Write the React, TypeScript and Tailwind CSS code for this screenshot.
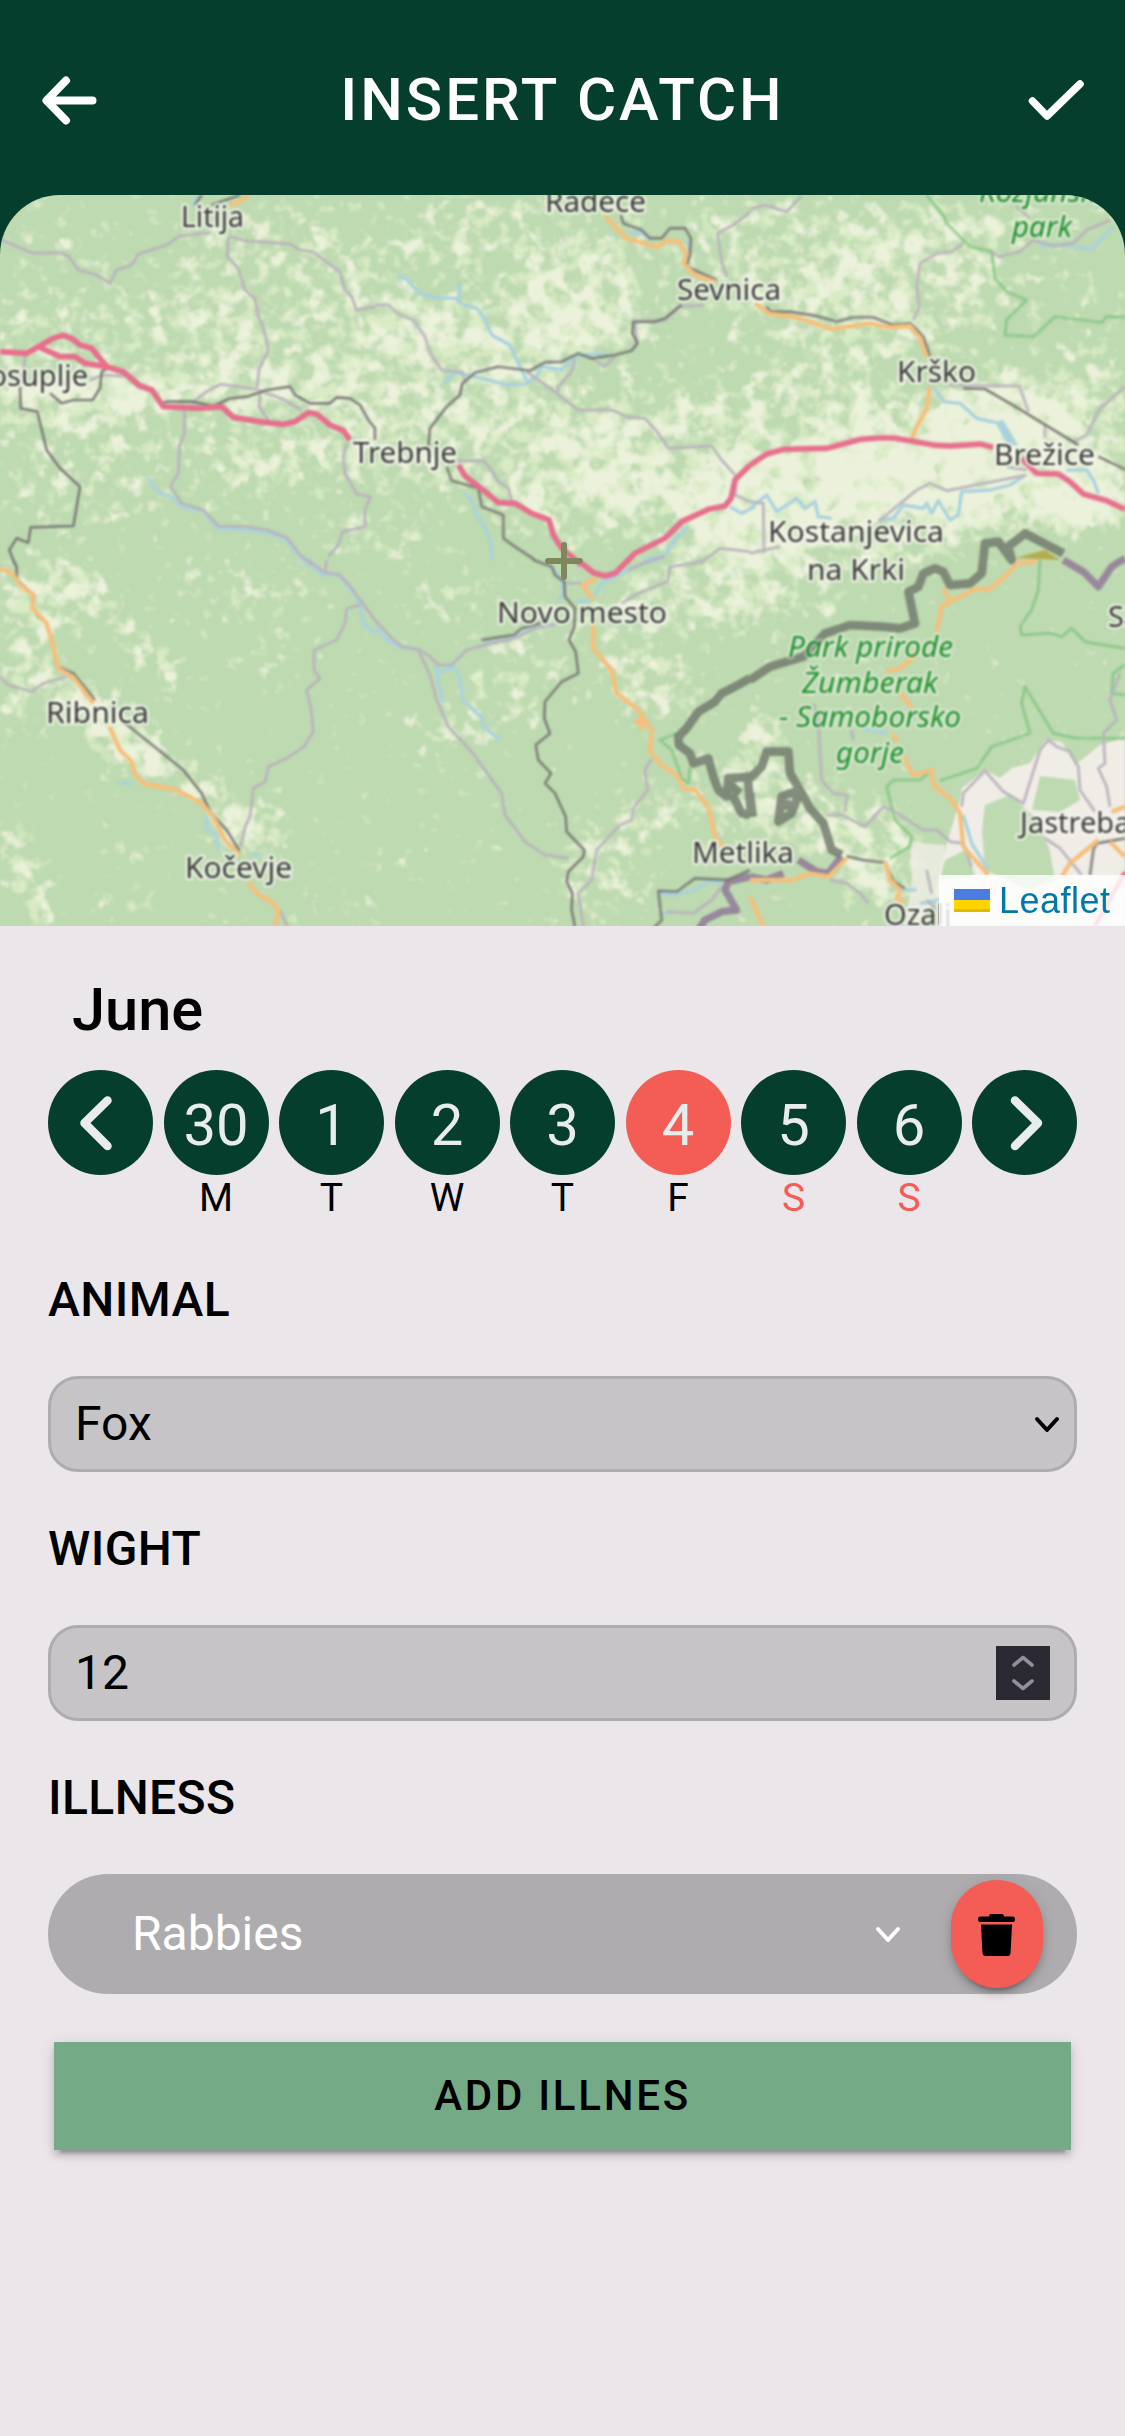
import React from "react";

/* ---------- Map ---------- */

type Kind = "motorway" | "main" | "road" | "rail" | "river" | "border" | "purple" | "park";

const STROKES: Record<Kind, { color: string; width: number; opacity?: number }> = {
  river: { color: "#a9d2de", width: 10 },
  park: { color: "#7cc27c", width: 9, opacity: 0.7 },
  road: { color: "#b9b3bb", width: 9, opacity: 0.9 },
  main: { color: "#f6bf7b", width: 13 },
  motorway: { color: "#e66f8d", width: 17 },
  rail: { color: "#767672", width: 8, opacity: 0.9 },
  border: { color: "#71786c", width: 26, opacity: 0.82 },
  purple: { color: "#8f7397", width: 22, opacity: 0.8 },
};

type Tile = { x: number; y: number; lines: [Kind, string][] };

/* Every tile holds its lines in thirds of a pixel, from its own corner. */
const TILES: Tile[] = [
  {
    x: 0,
    y: 190,
    lines: [
      ["river", "M445 862 L460 890 L485 912 L515 920 L550 952 L610 962 L650 1015 L740 1020 L800 1028 L860 1048 L890 1090 L930 1130"],
      ["road", "M0 148 L40 165 L100 190 L180 188 L205 198 L235 240 L290 255 L330 280 L350 240 L395 225 L415 192 L500 165 L540 137 L630 128"],
      ["road", "M690 140 L740 153 L870 162 L900 180 L940 186 L1020 245 L1035 300 L1055 320 L1070 360 L1125 350"],
      ["road", "M685 140 L682 200 L715 235 L735 300 L765 325 L775 380 L790 410 L805 480 L778 535 L770 598 L660 583 L615 608 L575 640"],
      ["road", "M775 600 L850 628 L905 660"],
      ["road", "M780 605 L778 650 L805 690"],
      ["road", "M553 655 L553 730 L538 770 L535 850 L512 888 L545 940 L610 960 L655 1008 L740 1010 L800 1020 L860 1042 L900 1095 L940 1125"],
      ["road", "M1040 760 L1030 800 L1035 850 L1070 912 L1112 920 L1095 960 L1095 1010 L1028 1025 L1015 1065 L985 1100"],
      ["road", "M75 495 L68 580"],
      ["road", "M270 570 L310 555 L400 560"],
      ["main", "M690 45 L720 35 L745 15"],
      ["river", "M580 50 L590 15"],
      ["rail", "M585 45 L605 15"],
      ["rail", "M635 45 L720 15"],
      ["rail", "M60 590 L62 655 L112 665 L140 780 L180 835 L240 890 L230 950 L220 1008 L92 1012 L85 1058 L50 1045 L28 1080 L45 1125"],
      ["rail", "M150 610 L185 640 L220 630 L278 630 L300 595 L305 545 L330 530"],
      ["motorway", "M0 485 L80 490 L160 445 L190 436 L215 445 L240 465 L275 475 L320 530"],
      ["motorway", "M115 470 L180 500 L225 500 L255 520 L320 530 L370 545 L420 588 L455 600 L490 650 L600 655 L665 650 L700 682 L780 695 L850 703 L885 695 L925 668 L950 672 L990 705 L1030 722 L1050 750"],
      ["rail", "M320 532 L365 545 L415 590 L455 598 L485 640 L500 635 L575 635 L640 648 L690 625 L740 620 L800 600 L870 590 L885 615 L930 640 L990 640 L1010 622 L1050 625 L1080 645 L1105 690 L1125 715 L1125 750"],
    ],
  },
  {
    x: 375,
    y: 190,
    lines: [
      ["river", "M68 258 L95 268 L135 310 L175 322 L245 325 L260 342 L305 355 L325 380 L350 435 L405 465 L430 520 L455 570"],
      ["river", "M253 278 L253 325"],
      ["river", "M208 580 L240 548 L300 560 L400 585 L450 582 L485 560 L500 530 L560 540 L600 500 L665 490 L700 500"],
      ["river", "M268 910 L290 930 L310 985 L335 1020 L350 1070 L352 1110"],
      ["river", "M760 128 L800 130 L830 145 M940 150 L945 190"],
      ["river", "M940 1010 L900 1050 L870 1095 L810 1108"],
      ["river", "M1065 950 L1100 970 L1140 950"],
      ["road", "M0 345 L40 345 L70 372 L115 390 L150 440 L165 490 L200 540 L260 545 L275 580"],
      ["road", "M455 545 L545 610 L610 660 L710 660 L760 682 L810 685 L850 730 L880 775 L1010 768 L1040 810 L1085 860 L1080 915 L1125 935"],
      ["road", "M600 505 L590 545 L550 590 L548 615"],
      ["road", "M650 505 L690 530 L720 500"],
      ["road", "M245 812 L325 812 L350 840 L370 875 L400 895 L410 935"],
      ["road", "M1125 65 L1075 105 L1028 130 L1040 215 L1055 262"],
      ["road", "M760 1140 L830 1110 L870 1100 M975 1120 L1035 1075 L1125 1085"],
      ["main", "M690 78 L755 145 L845 172 L875 152 L912 155 L935 190 L925 220 L960 255 L1020 275"],
      ["rail", "M738 75 L745 100 L800 120 L825 145 L860 145 L885 115 L930 115 L948 145 L945 190 L935 230 L1025 270"],
      ["road", "M985 345 L910 350 L870 390 L780 395 L785 460 L770 480"],
      ["rail", "M920 345 L870 385 L840 395 L775 395 L772 430 L788 460 L770 482 L720 495 L650 505 L610 490 L560 515 L510 517 L465 542 L370 530 L300 548 L262 580 L255 615 L215 650 L165 715 L160 770"],
      ["rail", "M215 830 L230 872 L310 895 L320 950 L385 975 L385 1045 L420 1070 L480 1110"],
      ["motorway", "M250 825 L270 858 L330 905 L370 938 L420 940 L470 970 L522 990 L535 1035 L560 1075 L620 1125"],
      ["motorway", "M755 1115 L780 1090 L870 1045 L920 995 L1000 958 L1050 948 L1068 925 L1080 870 L1125 825"],
    ],
  },
  {
    x: 750,
    y: 190,
    lines: [
      ["park", "M530 15 L580 75 L590 100 L640 150 L660 170 L725 185 L735 265 L770 305 L830 330 L770 390 L765 435 L850 440 L915 380 L1055 398 L1070 380 L1125 382"],
      ["river", "M550 590 L580 635 L630 640 L680 685 L750 700"],
      ["river", "M0 955 L50 915 L80 965 L140 925 L165 955 L195 935 L205 980 L245 985"],
      ["river", "M390 990 L430 985 L460 945 L520 955 L530 940 L545 970 L565 932 L600 990 L625 975 L635 905 L720 900 L780 885 L820 860"],
      ["river", "M870 170 L910 165 L950 165 L1025 178 L1090 110"],
      ["river", "M950 840 L1010 840 L1030 870 L1045 910"],
      ["road", "M0 58 L45 45 L110 65 L155 18"],
      ["road", "M640 160 L605 185 L560 190 L510 220 L500 290 L508 350 L490 390"],
      ["road", "M725 185 L750 200 L810 185 L850 150 L910 168 L970 160 L1010 120 L1080 90 M800 50 L840 85"],
      ["road", "M600 585 L808 588 L835 665 M1125 590 L1050 655 L1010 735 L970 755 M885 700 L885 745"],
      ["road", "M830 855 L590 902 L540 880 L500 900 L385 995"],
      ["road", "M0 935 L40 940 L42 1090 M0 1090 L90 1070 M770 830 L830 840"],
      ["main", "M15 340 L60 372 L130 380 L200 402 L245 418 L360 400 L415 412 L480 408 L510 445 L530 500 M540 590 L530 655 L500 710 L485 745"],
      ["rail", "M50 350 L60 365 L120 365 L200 378 L260 395 L310 382 L370 382 L430 405 L480 400 L520 440 L540 500"],
      ["rail", "M640 595 L705 597 L800 652 L985 765 M1045 800 L1125 838"],
      ["motorway", "M0 825 L50 792 L100 778 L230 775 L330 748 L400 743 L440 745 L550 765 L600 768 L690 762 L730 772"],
      ["motorway", "M815 805 L860 850 L925 852 L960 875 L1000 912 L1070 932 L1125 958"],
    ],
  },
  {
    x: 0,
    y: 560,
    lines: [
      ["river", "M915 0 L965 42 L1015 45 L1055 90 L1080 135 L1090 190 L1125 220"],
      ["river", "M618 770 L620 810 L645 820 L655 870 M352 668 L395 670 M755 880 L780 885"],
      ["road", "M0 350 L25 375 L95 395 L130 370 L200 350"],
      ["road", "M925 0 L970 35 L1020 45 L1055 85 L1125 180 M980 0 L975 35"],
      ["road", "M1080 135 L1040 145 L1035 190 L1010 240 L942 270 L942 330 L960 355 L920 390 L932 440 L940 515 L912 560 L860 595 L805 620 L795 665 L760 685 L750 770 L735 800 L722 860"],
      ["main", "M0 25 L40 42 L60 75 L100 105 L97 145 L140 190 L155 240 L175 325 L220 352 L280 430 M328 500 L360 570 L395 605 L405 645 L435 672 L530 690 L605 730 L640 770 L675 840 L720 885 M745 965 L770 1000 L820 1030 L835 1055 L825 1100"],
      ["rail", "M40 0 L50 20 L50 60 L100 105 L97 140 L115 170 L137 185 L155 240 L172 320 L220 340 L285 420 M370 485 L550 630 L605 700 L630 755 L680 810 L720 875"],
      ["road", "M840 1050 L862 1100"],
    ],
  },
  {
    x: 375,
    y: 560,
    lines: [
      ["river", "M0 200 L35 240 L75 262 L125 265"],
      ["river", "M185 315 L188 360 L205 430 M190 340 L235 320 L255 350 L262 420 L320 470 L325 500 L375 540"],
      ["river", "M325 250 L400 240 L470 205 L540 190"],
      ["river", "M530 20 L560 60 L565 100 L550 125 M850 0 L790 15 L720 50 L680 70 L660 105"],
      ["river", "M605 125 L650 120"],
      ["river", "M850 998 L900 1005 L960 990 L1000 965 L1040 970 M860 1060 L880 1060"],
      ["road", "M0 180 L50 235 L80 260 L130 268 L165 290 L190 315 L230 315 L275 270 L340 252 L420 235 L490 200 L540 195"],
      ["road", "M130 270 L165 345 L185 420 L220 500 L290 575 L380 700 L390 765 L450 845 L510 885 L580 895"],
      ["road", "M830 595 L810 630 L818 690 L775 745 L770 780 L735 795 L665 870 L650 960 L610 1000 L625 1100"],
      ["road", "M980 0 L960 10 L885 20 L878 65 L790 100 L740 130 M575 70 L620 70"],
      ["road", "M875 1055 L955 1060 L1010 1020 L1040 980"],
      ["rail", "M475 0 L530 20 L540 45 L568 65 L570 110 L600 145 L598 200 L582 240 L602 275 L610 340 L560 365 L510 425 L508 475 L525 520 L482 555 L490 600 L528 640 L510 670 L540 700 L572 770 L575 815 L628 870 L625 890 L580 935 L575 965 L592 1000 L590 1050 L600 1100"],
      ["rail", "M320 240 L415 225 L440 205 L500 188"],
      ["rail", "M830 1110 L860 1080 L850 992 L905 995 L960 955 L1060 960 L1125 930"],
      ["main", "M665 55 L622 75 L655 120 M655 190 L655 265 L710 330 L725 400 L790 450 L830 510 L825 575 L860 615 L905 645 L925 685 L960 690 L1000 740 L1020 830 L1045 860 M778 490 L800 480"],
      ["motorway", "M620 10 L655 38 L690 48 L720 40 L760 0"],
      ["park", "M905 520 L855 540 L890 570 L920 655 L940 670 L945 620"],
      ["purple", "M970 1110 L990 1080 L1040 1055 L1085 1050 L1050 990 L1060 965 L1125 950"],
      ["border", "M1125 355 L1080 380 L1040 400 L1020 425 L970 455 L935 505 L910 530 L912 555 L945 580 L955 610 L1000 595 L1015 650 L1030 690 L1055 710 L1060 655 L1125 650 M1070 700 L1100 760 L1125 765 M1060 670 L1095 700 M1118 650 L1122 700 L1128 760"],
    ],
  },
  {
    x: 750,
    y: 560,
    lines: [
      ["park", "M870 0 L865 90 L845 150 L810 200 L815 225 L900 220 L935 230 L965 205 L1005 245 L1060 255 L1125 265"],
      ["park", "M1125 315 L1090 340 L1085 400 L1125 405"],
      ["park", "M1125 535 L980 535 L910 520 L825 380 L815 430 L840 520 L725 560 L680 625 L570 662 M535 640 L510 660 L430 660 L410 680 L435 780 L485 830 L480 860 L420 895"],
      ["river", "M640 765 L665 850 L715 930 M340 505 L410 520 M455 990 L500 990 M510 1030 L570 1020"],
      ["road", "M190 430 L205 480 L210 580 L215 660 L250 700 L292 705 L285 755"],
      ["road", "M230 765 L275 765 L345 800 L400 740 L435 755 L520 810 L560 810 L600 845 L640 850 L665 920"],
      ["road", "M635 740 L640 700 L705 632 L760 695 L820 730 L870 570 L895 540 L920 560 L960 575 L985 620 L990 690 L1035 755"],
      ["road", "M1110 340 L1080 420 L1100 480 L1060 520 L1065 610 L1045 625 L1070 680 L1080 740"],
      ["road", "M885 835 L930 865 L995 945 M240 960 L290 970 L330 1000 L355 1030 M530 930 L545 1000"],
      ["road", "M560 1050 L530 1020 M305 510 L310 540"],
      ["main", "M860 5 L800 10 L770 45 L715 90 L680 85 L600 125 L580 85 M600 125 L575 140 L560 215 M500 280 L460 320 L410 335 M448 400 L485 440 M460 590 L490 645 L545 630 L550 675 L605 720 L630 760 L640 860 L715 945"],
      ["main", "M0 1010 L40 1100 M0 960 L130 960 L180 940 L235 950 L290 895"],
      ["main", "M430 520 L440 545 M1085 755 L1125 740 M1045 840 L960 910 L935 950 M1080 845 L1125 890 M405 905 L420 960 L450 990 L440 1020 L465 1025"],
      ["rail", "M290 888 L340 900 L405 908 L430 965 L465 985"],
      ["rail", "M1125 835 L1040 850 L1030 870 L1020 945"],
      ["purple", "M0 950 L50 960 L100 940 M145 900 L200 935 L235 940 L275 890"],
      ["purple", "M940 0 L1000 35 L1045 80 L1085 20 L1125 -5"],
      ["border", "M0 360 L60 320 L160 290 L225 220 L300 195 L400 200 L450 205 L495 190 L475 95 L505 80 L520 40 L555 25 L580 35 L600 75 L660 70 L695 40 L705 -50 L745 -55 L785 0 L775 -40 L825 -80 L940 -20"],
      ["border", "M0 655 L35 620 L50 575 L115 575 L120 640 L150 690 L95 710 L85 785 L125 760 L150 690 L180 745 L220 790 L245 870 L275 885 M0 700 L8 770 M110 720 L110 750"],
    ],
  },
];

/* Farmland density: cx, cy, rx, ry, opacity */
const FIELDS: [number, number, number, number, number][] = [
  [100, 340, 170, 55, 0.22],
  [290, 300, 120, 90, 0.22],
  [60, 400, 110, 26, 0.4],
  [190, 395, 130, 22, 0.35],
  [80, 470, 90, 50, 0.16],
  [300, 430, 80, 60, 0.22],
  [245, 470, 60, 26, 0.25],
  [520, 240, 130, 40, 0.22],
  [500, 330, 150, 40, 0.34],
  [580, 300, 60, 50, 0.34],
  [440, 380, 130, 55, 0.3],
  [500, 450, 170, 45, 0.28],
  [660, 450, 120, 60, 0.34],
  [600, 510, 100, 40, 0.34],
  [770, 500, 90, 60, 0.55],
  [790, 250, 110, 60, 0.28],
  [840, 330, 90, 50, 0.2],
  [900, 290, 110, 60, 0.28],
  [960, 230, 80, 30, 0.3],
  [820, 400, 80, 40, 0.28],
  [900, 455, 100, 45, 0.6],
  [1000, 420, 70, 40, 0.75],
  [960, 480, 140, 40, 0.6],
  [1090, 420, 50, 70, 0.4],
  [1090, 500, 50, 30, 0.7],
  [1040, 520, 70, 20, 0.4],
  [840, 530, 150, 45, 0.42],
  [780, 600, 70, 36, 0.26],
  [700, 590, 80, 45, 0.42],
  [580, 640, 100, 50, 0.24],
  [660, 690, 50, 36, 0.4],
  [450, 600, 50, 36, 0.25],
  [500, 700, 50, 40, 0.3],
  [450, 735, 40, 20, 0.35],
  [380, 540, 70, 24, 0.3],
  [30, 630, 45, 60, 0.35],
  [50, 590, 40, 40, 0.3],
  [30, 700, 60, 30, 0.35],
  [240, 590, 80, 35, 0.25],
  [270, 655, 40, 26, 0.22],
  [130, 750, 36, 30, 0.45],
  [100, 720, 36, 24, 0.35],
  [250, 830, 40, 24, 0.6],
  [130, 845, 14, 16, 0.4],
  [125, 905, 20, 22, 0.35],
  [10, 865, 12, 26, 0.4],
  [350, 910, 22, 12, 0.45],
  [600, 870, 45, 50, 0.4],
  [650, 810, 40, 26, 0.4],
  [720, 800, 36, 50, 0.3],
  [390, 870, 18, 16, 0.4],
  [760, 760, 22, 60, 0.55],
  [800, 815, 50, 40, 0.42],
  [870, 840, 50, 40, 0.45],
  [880, 890, 50, 20, 0.45],
];

const VALLEYS = [
  "M65 560 L105 610 L135 640 L175 685",
  "M75 690 L130 740 L205 790 L245 840",
  "M5 830 L20 870 L45 926",
];

const LABELS: { t: string; x: number; y: number; w?: number; park?: boolean; end?: boolean }[] = [
  { t: "Litija", x: 181, y: 227, w: 63 },
  { t: "Radeče", x: 545, y: 212, w: 101 },
  { t: "Sevnica", x: 677, y: 300, w: 104 },
  { t: "Grosuplje", x: 88, y: 386, end: true },
  { t: "Trebnje", x: 353, y: 463, w: 104 },
  { t: "Krško", x: 897, y: 382, w: 79 },
  { t: "Brežice", x: 994, y: 465, w: 101 },
  { t: "Kostanjevica", x: 768, y: 542, w: 176 },
  { t: "na Krki", x: 807, y: 580, w: 98 },
  { t: "Novo mesto", x: 497, y: 623, w: 170 },
  { t: "Ribnica", x: 46, y: 723, w: 103 },
  { t: "Kočevje", x: 185, y: 878, w: 107 },
  { t: "Metlika", x: 692, y: 863, w: 102 },
  { t: "Jastrebarsko", x: 1020, y: 833 },
  { t: "Samobor", x: 1108, y: 627 },
  { t: "Ozalj", x: 884, y: 925 },
  { t: "Kozjanski", x: 979, y: 202, w: 124, park: true },
  { t: "park", x: 1012, y: 237, w: 60, park: true },
  { t: "Park prirode", x: 788, y: 657, w: 165, park: true },
  { t: "Žumberak", x: 802, y: 693, w: 136, park: true },
  { t: "- Samoborsko", x: 779, y: 727, w: 182, park: true },
  { t: "gorje", x: 836, y: 763, w: 68, park: true },
];

const ORDER: Kind[] = ["river", "park", "border", "purple", "road", "rail", "main", "motorway"];

function MapDrawing() {
  return (
    <svg viewBox="0 195 1125 731" className="block h-full w-full" aria-label="Map">
      <defs>
        <filter id="fields" x="0" y="195" width="1125" height="731" filterUnits="userSpaceOnUse" colorInterpolationFilters="sRGB">
          <feTurbulence type="fractalNoise" baseFrequency="0.055" numOctaves="4" seed="7" result="n" />
          <feColorMatrix in="n" type="matrix" values="0 0 0 0 0  0 0 0 0 0  0 0 0 0 0  1 0 0 0 0" result="na" />
          <feGaussianBlur in="SourceAlpha" stdDeviation="12" result="d" />
          <feComposite in="na" in2="d" operator="arithmetic" k1="0" k2="1" k3="0.58" k4="-0.73" result="s" />
          <feComponentTransfer in="s" result="m">
            <feFuncA type="linear" slope="5" intercept="0" />
          </feComponentTransfer>
          <feFlood floodColor="#ebf1da" />
          <feComposite operator="in" in2="m" result="c" />
          <feGaussianBlur in="c" stdDeviation="0.8" />
        </filter>
        <filter id="meadow" x="0" y="195" width="1125" height="731" filterUnits="userSpaceOnUse" colorInterpolationFilters="sRGB">
          <feTurbulence type="fractalNoise" baseFrequency="0.07" numOctaves="4" seed="23" result="n" />
          <feColorMatrix in="n" type="matrix" values="0 0 0 0 0  0 0 0 0 0  0 0 0 0 0  1 0 0 0 0" result="na" />
          <feGaussianBlur in="SourceAlpha" stdDeviation="12" result="d" />
          <feComposite in="na" in2="d" operator="arithmetic" k1="0" k2="1" k3="0.6" k4="-0.71" result="s" />
          <feComponentTransfer in="s" result="m">
            <feFuncA type="linear" slope="4" intercept="0" />
          </feComponentTransfer>
          <feFlood floodColor="#d9ebc5" />
          <feComposite operator="in" in2="m" result="c" />
          <feGaussianBlur in="c" stdDeviation="0.8" />
        </filter>
        <filter id="soft" x="0" y="195" width="1125" height="731" filterUnits="userSpaceOnUse" colorInterpolationFilters="sRGB">
          <feGaussianBlur stdDeviation="0.8" />
        </filter>
        <g id="density">
          {FIELDS.map(([cx, cy, rx, ry, o], i) => (
            <ellipse key={i} cx={cx} cy={cy} rx={rx} ry={ry} opacity={o} />
          ))}
          <rect x="0" y="195" width="1125" height="330" opacity="0.16" />
          {VALLEYS.map((d) => (
            <path key={d} d={d} fill="none" stroke="#000" strokeWidth="24" opacity="0.6" />
          ))}
        </g>
      </defs>

      <rect x="0" y="195" width="1125" height="731" fill="#bedab1" />
      <use href="#density" filter="url(#meadow)" />
      <use href="#density" filter="url(#fields)" />

      <g filter="url(#soft)">
        <g fill="#f0ede6">
          <path d="M960 800 L962 788 L985 770 L1000 778 L1012 768 L1030 763 L1045 740 L1062 742 L1075 765 L1100 745 L1125 738 L1125 926 L940 926 L935 890 L945 850 Z" />
          <path d="M910 842 L945 845 L940 890 L920 926 L905 926 L912 880 Z" opacity="0.8" />
        </g>
        <g fill="#bedab1">
          <path d="M985 805 L1010 795 L1040 822 L1050 852 L1055 880 L1030 890 L985 870 L982 830 Z" />
          <path d="M1040 776 L1075 780 L1080 800 L1060 812 L1032 810 Z" />
          <path d="M945 860 L965 850 L975 875 L940 880 Z" />
        </g>
        <path d="M1003 420 L1018 445 L1009 447 L995 422 Z" fill="#a9d2de" />
        <path d="M637 724 L642 732 L646 722 L640 712 Z" fill="#f6bf7b" />
        <path d="M1015 558 L1060 560 L1045 550 Z" fill="#b5ad4c" />
        {ORDER.map((kind) => {
          const s = STROKES[kind];
          return (
            <g
              key={kind}
              fill="none"
              stroke={s.color}
              strokeWidth={s.width}
              opacity={s.opacity ?? 1}
              strokeLinejoin="round"
              strokeLinecap="butt"
            >
              {TILES.map((tile) =>
                tile.lines
                  .filter(([k]) => k === kind)
                  .map(([, d]) => (
                    <path key={d} d={d} transform={`translate(${tile.x} ${tile.y}) scale(0.33333)`} />
                  )),
              )}
            </g>
          );
        })}
        <path d="M1125 872 L1095 926" stroke="#e66f8d" strokeWidth="4" fill="none" />
      </g>

      <g
        fontFamily='"Noto Sans", "Open Sans", sans-serif'
        fontSize="29"
        stroke="#f7f7f0"
        strokeWidth="5"
        strokeLinejoin="round"
        paintOrder="stroke"
        filter="url(#soft)"
      >
        {LABELS.map((l) => (
          <text
            key={l.t}
            x={l.x}
            y={l.y}
            textAnchor={l.end ? "end" : "start"}
            textLength={l.w}
            lengthAdjust="spacingAndGlyphs"
            fill={l.park ? "#209030" : "#3a3a3a"}
            fontStyle={l.park ? "italic" : "normal"}
            strokeOpacity={l.park ? 0.35 : 0.65}
          >
            {l.t}
          </text>
        ))}
      </g>

      <path d="M548 561 H580 M564 545 V577" stroke="#7f875d" strokeWidth="6" strokeLinecap="round" />
    </svg>
  );
}

function CatchMap() {
  return (
    <div className="relative h-[731px] w-full overflow-hidden rounded-t-[60px]">
      <MapDrawing />
      <div className="absolute right-0 bottom-0 flex h-[51px] w-[186px] items-center bg-white/80 pl-[15px] text-[#0078a8]">
        <span className="flex h-[23px] w-9 flex-col">
          <span className="h-[11px] bg-[#4c7be1]" />
          <span className="h-[9px] bg-[#ffd500]" />
          <span className="h-[3px] bg-[#e0bc00]" />
        </span>
        <span className="ml-[9px] font-['Liberation_Sans',Arial,sans-serif] text-[36px] leading-[51px] tracking-[0.5px]">Leaflet</span>
      </div>
    </div>
  );
}

/* ---------- Calendar ---------- */

const DAYS = [
  { n: "30", d: "M" },
  { n: "1", d: "T" },
  { n: "2", d: "W" },
  { n: "3", d: "T" },
  { n: "4", d: "F", active: true },
  { n: "5", d: "S", weekend: true },
  { n: "6", d: "S", weekend: true },
];

function ArrowCircle({ d }: { d: string }) {
  return (
    <button className="flex size-[105px] items-center justify-center rounded-full bg-[#053e2d]">
      <svg viewBox="0 0 105 105" className="size-[105px]" fill="none" stroke="#e9ecec" strokeWidth="8.5" strokeLinecap="round" strokeLinejoin="round">
        <path d={d} />
      </svg>
    </button>
  );
}

function WeekStrip() {
  return (
    <div className="flex justify-between">
      <ArrowCircle d="M59.5 30.5 L36.5 53 L59.5 76" />
      {DAYS.map((day) => (
        <div key={day.n} className="flex w-[105px] flex-col items-center">
          <div
            className={
              "flex size-[105px] items-center justify-center rounded-full pt-1 text-[58px] leading-none text-[#e9ecec] " +
              (day.active ? "bg-[#f45d55]" : "bg-[#053e2d]")
            }
          >
            {day.n}
          </div>
          <span className={"text-[39px] leading-[46px] " + (day.weekend ? "text-[#f45d55]" : "text-black")}>{day.d}</span>
        </div>
      ))}
      <ArrowCircle d="M43 30.5 L66 53 L43 76" />
    </div>
  );
}

/* ---------- Form ---------- */

function Label({ children }: { children: React.ReactNode }) {
  return <h2 className="h-[56px] text-[48px] leading-[56px] font-medium tracking-[0.4px]">{children}</h2>;
}

function Chevron({ className }: { className: string }) {
  return (
    <svg viewBox="0 0 26 17" className={className} fill="none" stroke="currentColor" strokeWidth="4" strokeLinecap="round" strokeLinejoin="round">
      <path d="M3 3 L13 14 L23 3" />
    </svg>
  );
}

function StepIcon({ d }: { d: string }) {
  return (
    <svg viewBox="0 0 22 12" className="h-3 w-[22px]" fill="none" stroke="#8f8f9d" strokeWidth="3.6" strokeLinecap="round" strokeLinejoin="round">
      <path d={d} />
    </svg>
  );
}

export default function App() {
  return (
    <div className="h-[2436px] w-[1125px] overflow-hidden bg-[#ebe6ea] font-[Roboto,sans-serif] text-black">
      <div className="bg-[#053e2d]">
        <header className="flex h-[195px] items-center justify-between pt-[5px] pr-[38px] pl-[38px] text-white">
          <svg viewBox="0 0 60 60" className="size-[60px]" fill="none" stroke="currentColor" strokeWidth="8" strokeLinecap="round" strokeLinejoin="round">
            <path d="M28 10.5 L8.5 30.5 L28 50.5 M11 30.5 H54.5" />
          </svg>
          <h1 className="text-[60px] leading-[70px] font-medium tracking-[0.05em]">INSERT CATCH</h1>
          <svg viewBox="0 0 60 60" className="size-[60px]" fill="none" stroke="currentColor" strokeWidth="7.5" strokeLinecap="round" strokeLinejoin="round">
            <path d="M5.5 31 L20 46 L53 14" />
          </svg>
        </header>
        <CatchMap />
      </div>

      <main className="px-12 pt-[49px]">
        <h2 className="mb-[24px] pl-6 text-[59.5px] leading-[71px] font-medium">June</h2>
        <WeekStrip />

        <div className="mt-[51px]">
          <Label>ANIMAL</Label>
          <div className="mt-[48px] flex h-24 items-center justify-between rounded-[30px] border-[3px] border-[#aeacaf] bg-[#c6c4c7] pr-[14px] pl-6">
            <span className="text-[48px] leading-[56px]">Fox</span>
            <Chevron className="h-[17px] w-[26px]" />
          </div>
        </div>

        <div className="mt-[49px]">
          <Label>WIGHT</Label>
          <div className="mt-[48px] flex h-24 items-center justify-between rounded-[30px] border-[3px] border-[#aeacaf] bg-[#c6c4c7] pr-6 pl-6">
            <span className="text-[48px] leading-[56px]">12</span>
            <span className="flex h-[54px] w-[54px] flex-col items-center justify-center gap-3 bg-[#2b2a33]">
              <StepIcon d="M2 10 L11 2.5 L20 10" />
              <StepIcon d="M2 2 L11 9.5 L20 2" />
            </span>
          </div>
        </div>

        <div className="mt-[49px]">
          <Label>ILLNESS</Label>
          <div className="mt-[48px] flex h-[120px] items-center rounded-full bg-[#aeacaf] pr-[34px] pl-[84px] text-white">
            <span className="flex-1 text-[48px] leading-[56px]">Rabbies</span>
            <Chevron className="mr-[50px] h-[17px] w-[26px]" />
            <button className="flex h-[108px] w-[92px] items-center justify-center rounded-full bg-[#f45d55] pr-[2px] text-black shadow-[0_9px_3px_-6px_rgba(0,0,0,0.2),0_6px_6px_0_rgba(0,0,0,0.14),0_3px_15px_0_rgba(0,0,0,0.12)]">
              <svg viewBox="0 0 37 42" className="mt-px h-[42px] w-[37px]" fill="currentColor">
                <path d="M13 0 H24 Q26 0 26 2.4 H34.5 Q37 2.4 37 5.2 Q37 8 34.5 8 H2.5 Q0 8 0 5.2 Q0 2.4 2.5 2.4 H11 Q11 0 13 0 Z" />
                <path d="M3 10.4 H34 L32.6 38.4 Q32.4 42 29 42 H8 Q4.600 42 4.400 38.4 Z" />
              </svg>
            </button>
          </div>
        </div>

        <button className="mx-[6px] mt-12 flex h-[108px] w-[1017px] items-center justify-center bg-[#74ab86] text-[42px] leading-[50px] font-medium tracking-[0.065em] shadow-[0_9px_3px_-6px_rgba(0,0,0,0.2),0_6px_6px_0_rgba(0,0,0,0.14),0_3px_15px_0_rgba(0,0,0,0.12)]">
          ADD ILLNES
        </button>
      </main>
    </div>
  );
}
